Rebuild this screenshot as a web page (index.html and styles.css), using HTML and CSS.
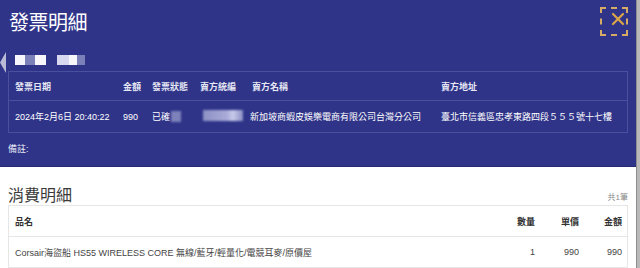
FILE: index.html
```html
<!DOCTYPE html>
<html lang="zh-Hant">
<head>
<meta charset="utf-8">
<title>發票明細</title>
<link rel="stylesheet" href="styles.css">
</head>
<body>
<div class="page">
  <div class="modal">
    <section class="invoice">
      <div class="side-tab"></div>
      <h1 class="title">發票明細</h1>
      <button class="close" aria-label="關閉">
        <svg viewBox="0 0 16 16" width="16" height="16"><path d="M3 3 L13 13 M13 3 L3 13" stroke="#d9a548" stroke-width="2.2" stroke-linecap="round" fill="none"/></svg>
      </button>
      <div class="masked">
        <span class="blk w a"></span><span class="blk g a"></span><span class="blk w b"></span>
        <span class="gap"></span>
        <span class="blk l c"></span><span class="blk w d"></span><span class="blk g d"></span>
      </div>
      <div class="info">
        <div class="info-row head">
          <div>發票日期</div><div>金額</div><div>發票狀態</div><div>賣方統編</div><div>賣方名稱</div><div>賣方地址</div>
        </div>
        <div class="info-row">
          <div>2024年2月6日 20:40:22</div><div>990</div><div class="status">已確<span class="smear s1"></span></div><div><span class="smear s2"></span></div><div class="seller">新加坡商蝦皮娛樂電商有限公司台灣分公司</div><div>臺北市信義區忠孝東路四段５５５號十七樓</div>
        </div>
      </div>
      <div class="note">備註:</div>
    </section>
    <section class="detail">
      <div class="detail-head">
        <h2 class="subtitle">消費明細</h2>
        <span class="count">共1筆</span>
      </div>
      <div class="items">
        <div class="item-row head">
          <div>品名</div><div class="num">數量</div><div class="num">單價</div><div class="num">金額</div>
        </div>
        <div class="item-row">
          <div>Corsair海盜船 HS55 WIRELESS CORE 無線/藍牙/輕量化/電競耳麥/原價屋</div><div class="num">1</div><div class="num">990</div><div class="num">990</div>
        </div>
      </div>
    </section>
  </div>
  <div class="scroll"></div>
</div>
</body>
</html>
```

FILE: styles.css
```css
* { box-sizing: border-box; }
html, body { margin: 0; padding: 0; }
body {
  width: 640px;
  height: 268px;
  overflow: hidden;
  background: #fff;
  font-family: "Liberation Sans", "Noto Sans CJK TC", sans-serif;
}
.page { display: flex; height: 268px; }
.modal { width: 636px; display: flex; flex-direction: column; }
.scroll {
  width: 4px;
  background: #b9b9b9;
  border-left: 1px solid #8e8e8e;
}
.invoice {
  position: relative;
  height: 167px;
  background: #2f3489;
  border-bottom: 1px solid #262a72;
  padding: 8px 8px 0 8px;
  color: #fff;
}
.side-tab {
  position: absolute;
  left: 0;
  top: 52px;
  width: 6px;
  height: 21px;
  background: #b9bad6;
  clip-path: polygon(100% 0, 100% 100%, 0 50%);
}
.title {
  margin: 0 0 0 1px;
  font-size: 20px;
  line-height: 28px;
  font-weight: 400;
  letter-spacing: -0.5px;
  font-family: "Noto Sans CJK TC", sans-serif;
}
.close {
  position: absolute;
  top: 7px;
  right: 8px;
  width: 28px;
  height: 29px;
  padding: 0 0 6px 8px;
  border: 2px dashed #d6ab66;
  background: transparent;
  display: flex;
  align-items: center;
  justify-content: center;
}
.masked {
  display: flex;
  align-items: center;
  margin: 19px 0 0 7px;
  height: 10px;
  filter: blur(0.4px);
}
.blk { display: block; height: 10px; }
.blk.w { background: #f6f6fb; }
.blk.g { background: #7c80b8; }
.blk.l { background: #d8d9f0; }
.blk.a { width: 10px; }
.blk.b { width: 11px; }
.blk.c { width: 12px; }
.blk.d { width: 8px; }
.gap { width: 11px; }
.info {
  margin-top: 6px;
  border: 1px solid #4a4f9e;
  font-size: 9px;
}
.info-row {
  display: grid;
  grid-template-columns: 108px 29px 48px 52px 189px 1fr;
  align-items: center;
  height: 31px;
}
.info-row > div { padding-left: 6px; white-space: nowrap; }
.info-row.head {
  height: 29px;
  border-bottom: 1px solid #4a4f9e;
  font-weight: 700;
  color: #e6e7f4;
}
.status { display: flex; align-items: center; }
.smear {
  display: inline-block;
  height: 11px;
  filter: blur(1px);
}
.s1 { width: 10px; background: #7e82ba; margin-left: 1px; }
.s2 { width: 40px; background: linear-gradient(90deg, #8c90c4 0%, #a9acd8 60%, #c9cbe9 75%, #8a8ec4 100%); margin-left: 3px; }
.seller { position: relative; left: -2px; }
.note {
  margin-top: 10px;
  font-size: 9px;
  line-height: 12px;
  color: #e6e7f4;
}
.detail {
  padding: 16px 8px 0 8px;
  color: #333;
}
.detail-head {
  display: flex;
  justify-content: space-between;
  align-items: center;
  height: 22px;
}
.subtitle {
  margin: 0;
  font-size: 16px;
  line-height: 22px;
  font-weight: 400;
  color: #3a3a3a;
  font-family: "Noto Sans CJK TC", sans-serif;
}
.count { font-size: 8px; color: #888; margin-top: 4px; }
.items {
  margin-top: 0;
  border: 1px solid #e6e6e6;
  border-bottom: none;
  font-size: 9px;
}
.item-row {
  display: grid;
  grid-template-columns: 1fr 44px 44px 43px;
  align-items: center;
  height: 31px;
  border-bottom: 1px solid #e6e6e6;
  color: #444;
}
.item-row > div { padding: 0 5px 0 6px; white-space: nowrap; }
.item-row.head { font-weight: 700; color: #333; }
.num { text-align: right; }
```
